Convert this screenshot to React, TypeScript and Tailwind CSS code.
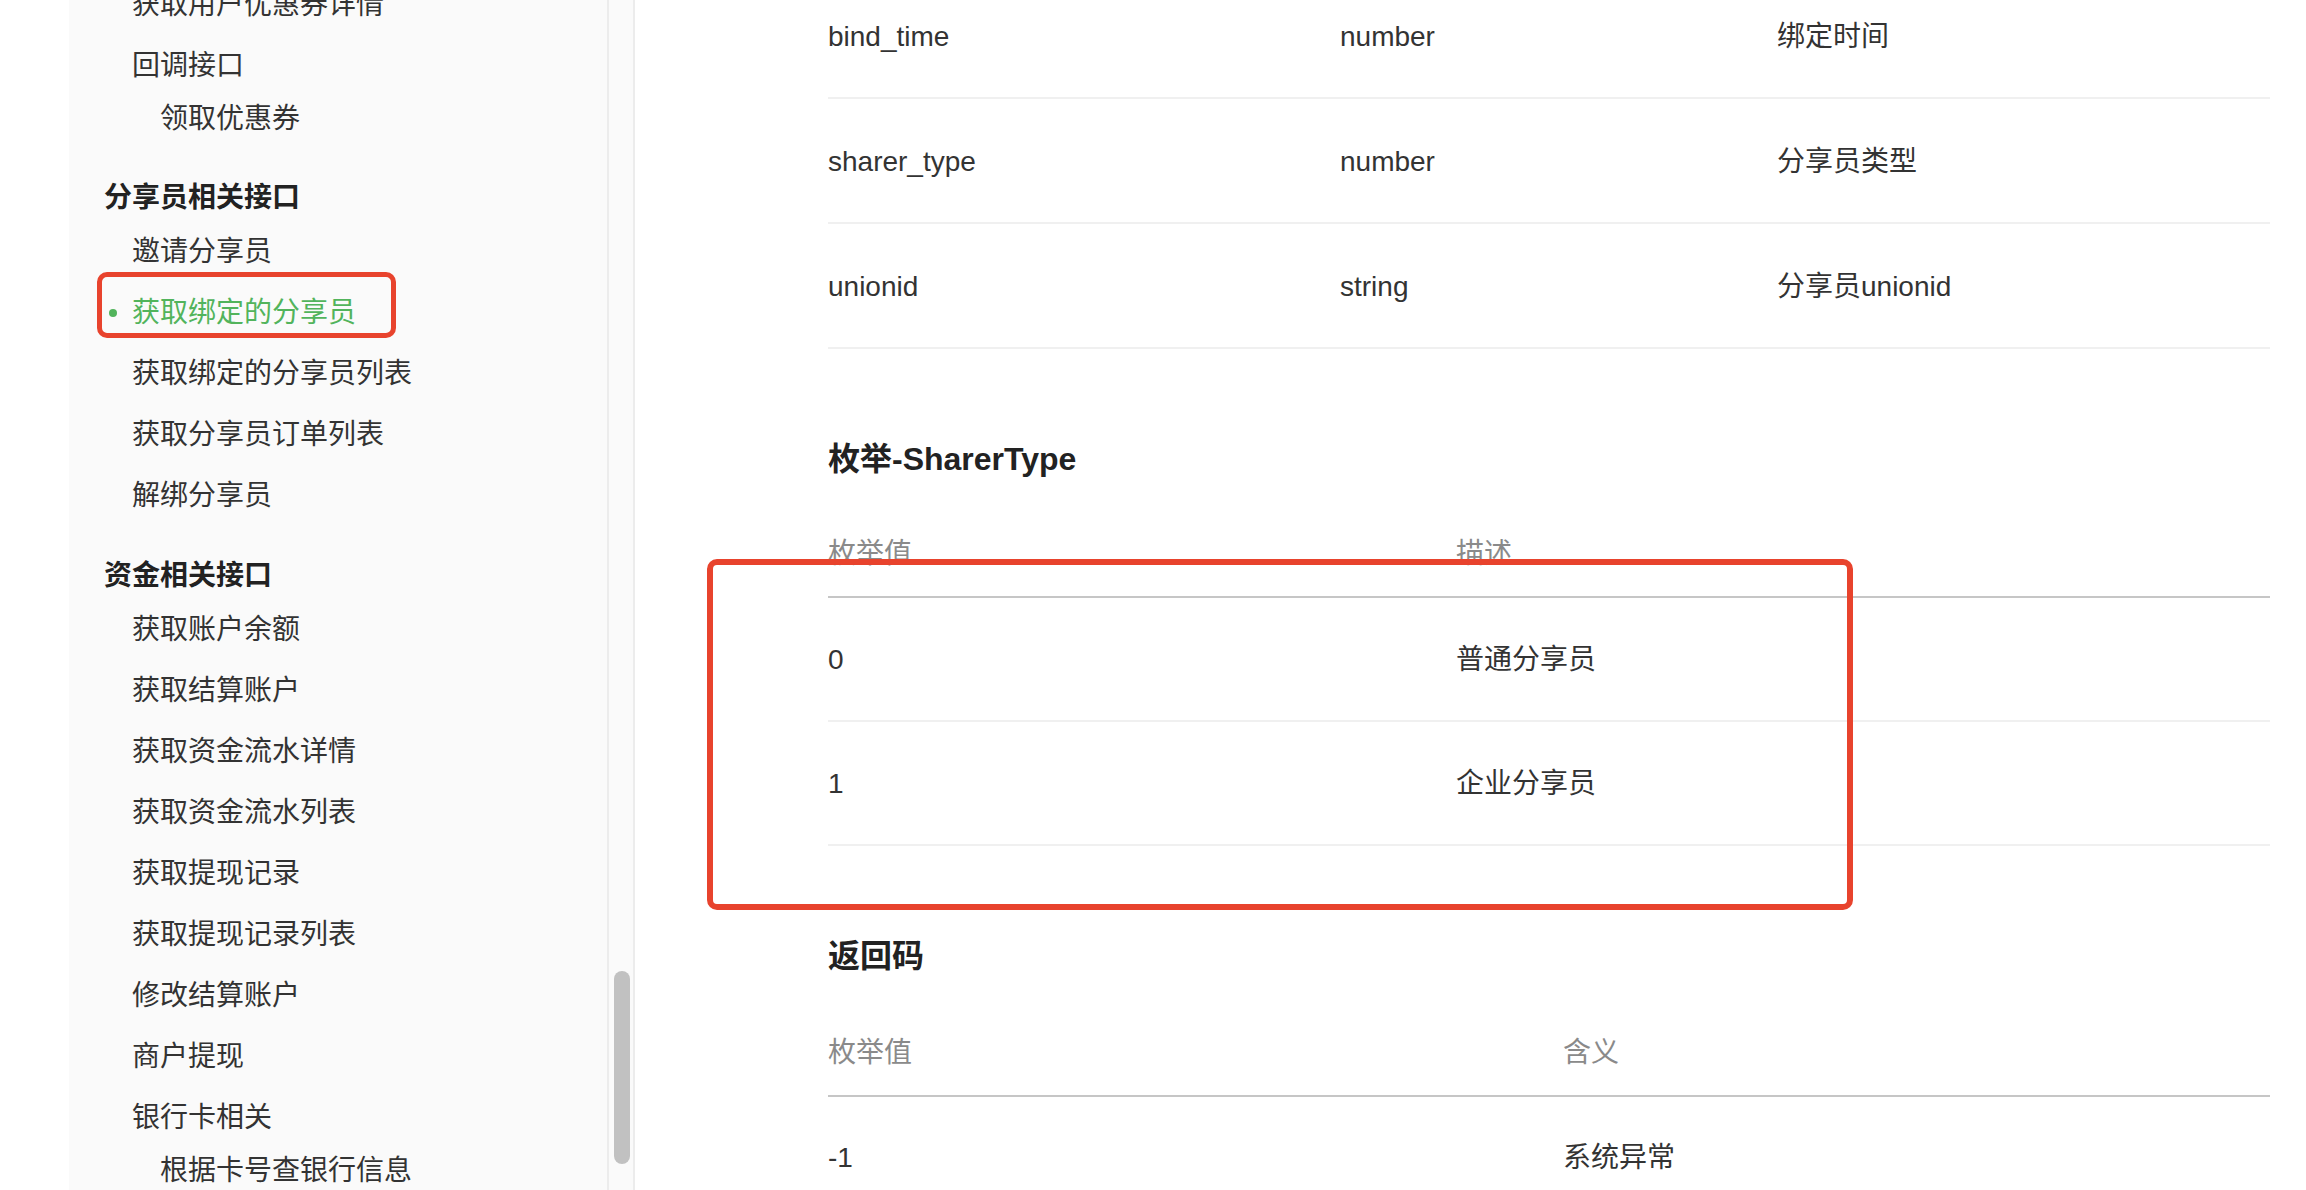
import React from "react";

const FONT = { fontFamily: '"Liberation Sans", "Noto Sans CJK SC", sans-serif' };

type NavItem =
  | { kind: "item"; text: string; active?: boolean }
  | { kind: "sub"; text: string }
  | { kind: "head"; text: string; mt: string };

function NavRow({ item }: { item: NavItem }) {
  if (item.kind === "head") {
    return (
      <div className={`flex h-[46px] items-center pl-[35px] text-[28px] font-bold text-[#222] ${item.mt}`}>
        {item.text}
      </div>
    );
  }
  if (item.kind === "sub") {
    return <div className="flex h-[45px] items-center pl-[91px] text-[28px] text-[#333]">{item.text}</div>;
  }
  if (item.active) {
    return (
      <div className="relative flex h-[61px] items-center pl-[63px] text-[28px] text-[#52b45c]">
        <span className="absolute left-[40px] top-[27px] h-[8px] w-[8px] rounded-full bg-[#52b45c]" />
        {item.text}
      </div>
    );
  }
  return <div className="flex h-[61px] items-center pl-[63px] text-[28px] text-[#333]">{item.text}</div>;
}

const nav: NavItem[] = [
  { kind: "item", text: "获取用户优惠券详情" },
  { kind: "item", text: "回调接口" },
  { kind: "sub", text: "领取优惠券" },
  { kind: "head", text: "分享员相关接口", mt: "mt-[34px]" },
  { kind: "item", text: "邀请分享员" },
  { kind: "item", text: "获取绑定的分享员", active: true },
  { kind: "item", text: "获取绑定的分享员列表" },
  { kind: "item", text: "获取分享员订单列表" },
  { kind: "item", text: "解绑分享员" },
  { kind: "head", text: "资金相关接口", mt: "mt-[27px]" },
  { kind: "item", text: "获取账户余额" },
  { kind: "item", text: "获取结算账户" },
  { kind: "item", text: "获取资金流水详情" },
  { kind: "item", text: "获取资金流水列表" },
  { kind: "item", text: "获取提现记录" },
  { kind: "item", text: "获取提现记录列表" },
  { kind: "item", text: "修改结算账户" },
  { kind: "item", text: "商户提现" },
  { kind: "item", text: "银行卡相关" },
  { kind: "sub", text: "根据卡号查银行信息" },
];

const fields = [
  ["bind_time", "number", "绑定时间"],
  ["sharer_type", "number", "分享员类型"],
  ["unionid", "string", "分享员unionid"],
];

export default function App() {
  return (
    <div
      className="relative flex h-[1190px] w-[2306px] overflow-hidden bg-white text-[#333]"
      style={FONT}
    >
      {/* left white gutter */}
      <div className="w-[69px] shrink-0 bg-white" />

      {/* sidebar */}
      <div className="w-[538px] shrink-0 bg-[#fafafa]">
        <div className="mt-[-26px]">
          {nav.map((item, i) => (
            <NavRow key={i} item={item} />
          ))}
        </div>
      </div>

      {/* scrollbar track */}
      <div className="relative w-[28px] shrink-0 border-l-2 border-r-2 border-[#ececec] bg-[#fafafa]">
        <div className="absolute left-[5px] top-[971px] h-[193px] w-[16px] rounded-full bg-[#c1c1c1]" />
      </div>

      {/* main */}
      <div className="flex-1 pl-[193px] pr-[36px]">
        {/* fields table */}
        <div className="mt-[-26px]">
          {fields.map((r) => (
            <div
              key={r[0]}
              className="grid h-[125px] grid-cols-[512px_437px_1fr] items-center border-b-2 border-[#f0f0f0] pt-[3px] text-[28px] text-[#333]"
            >
              <div>{r[0]}</div>
              <div>{r[1]}</div>
              <div>{r[2]}</div>
            </div>
          ))}
        </div>

        {/* enum */}
        <div className="mt-[87px] flex h-[46px] items-center text-[32px] font-bold text-[#222]">
          枚举-SharerType
        </div>
        <div className="mt-[28px] grid h-[88px] grid-cols-[628px_1fr] items-center border-b-2 border-[#c6c6c6] pt-[2px] text-[28px] text-[#8a8a8a]">
          <div>枚举值</div>
          <div>描述</div>
        </div>
        {[
          ["0", "普通分享员"],
          ["1", "企业分享员"],
        ].map((r) => (
          <div
            key={r[0]}
            className="grid h-[124px] grid-cols-[628px_1fr] items-center border-b-2 border-[#f0f0f0] pt-[2px] text-[28px] text-[#333]"
          >
            <div>{r[0]}</div>
            <div>{r[1]}</div>
          </div>
        ))}

        {/* return codes */}
        <div className="mt-[87px] flex h-[46px] items-center text-[32px] font-bold text-[#222]">
          返回码
        </div>
        <div className="mt-[30px] grid h-[88px] grid-cols-[735px_1fr] items-center border-b-2 border-[#c6c6c6] pt-[2px] text-[28px] text-[#8a8a8a]">
          <div>枚举值</div>
          <div>含义</div>
        </div>
        <div className="grid h-[124px] grid-cols-[735px_1fr] items-center border-b-2 border-[#f0f0f0] text-[28px] text-[#333]">
          <div>-1</div>
          <div>系统异常</div>
        </div>
      </div>

      {/* red annotation boxes */}
      <div className="pointer-events-none absolute left-[97px] top-[272px] h-[66px] w-[299px] rounded-[10px] border-[5px] border-[#e8432d]" />
      <div className="pointer-events-none absolute left-[707px] top-[559px] h-[351px] w-[1146px] rounded-[10px] border-[6px] border-[#e8432d]" />
    </div>
  );
}
